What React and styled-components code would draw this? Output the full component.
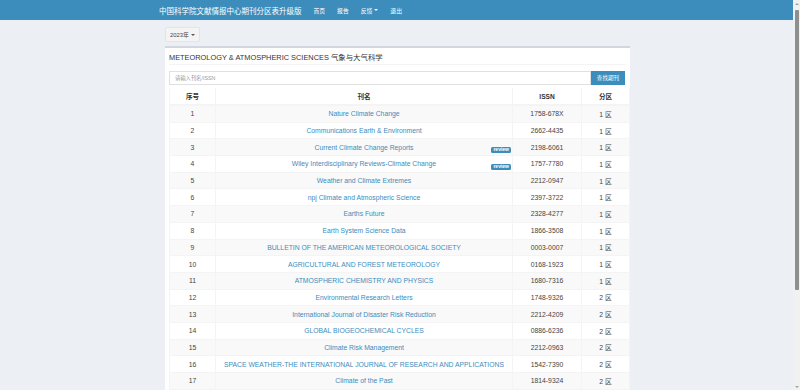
import React from 'react';
import styled, { createGlobalStyle } from 'styled-components';

const GlobalStyle = createGlobalStyle`
  html, body {
    margin: 0;
    padding: 0;
    background: #ecf0f5;
    font-family: "Liberation Sans", "Noto Sans CJK SC", sans-serif;
    color: #333;
    overflow: hidden;
  }
`

// ============== Janela
const Janela = styled.div`
  display: flex;
  height: 100vh;
`
const Pagina = styled.div`
  flex: 1;
  overflow: hidden;
`

// ============== Barra de rolagem
const Rolagem = styled.div`
  width: 7px;
  background: #f1f1f1;
  display: flex;
  flex-direction: column;
  align-items: center;
`
const SetaRolagem = styled.div`
  height: 7px;
  display: flex;
  align-items: center;
  justify-content: center;
  &::after {
    content: '';
    border-left: 2px solid transparent;
    border-right: 2px solid transparent;
    ${props => (props.baixo ? 'border-top' : 'border-bottom')}: 2px solid #a3a3a3;
  }
`
const Trilho = styled.div`
  flex: 1;
  width: 100%;
  display: flex;
  justify-content: center;
  padding-top: 3px;
`
const Polegar = styled.div`
  width: 4px;
  height: 280px;
  background: #8f8f8f;
  border-radius: 1px;
`

// ============== Barra superior
const Navbar = styled.div`
  height: 20px;
  background-color: #3c8dbc;
  display: flex;
  align-items: center;
  padding-left: 159px;
  color: #fff;
`
const Marca = styled.span`
  font-size: 7.5px;
  margin-right: 6px;
`
const ItemMenu = styled.span`
  font-size: 5.8px;
  margin: 0 6px;
  display: flex;
  align-items: center;
  gap: 2px;
`
const Seta = styled.span`
  display: inline-block;
  border-left: 2px solid transparent;
  border-right: 2px solid transparent;
  border-top: 2px solid ${props => props.cor || '#fff'};
`

// ============== Conteudo
const Conteudo = styled.div`
  width: 465px;
  margin: 0 auto;
  padding: 3px 0 0 2px;
`
const BotaoAno = styled.div`
  display: inline-flex;
  align-items: center;
  gap: 2px;
  height: 15px;
  padding: 0 4px;
  background: #f4f4f4;
  border: 1px solid #e4e4e4;
  border-radius: 2px;
  font-size: 5.8px;
  color: #444;
  box-sizing: border-box;
`
const Cartao = styled.div`
  margin-top: 4px;
  background: #fff;
  border-top: 2px solid #d2d6de;
  padding: 0 5px 0 4px;
  min-height: 400px;
`
const Titulo = styled.div`
  font-size: 7.4px;
  color: #333;
  height: 16px;
  display: flex;
  align-items: center;
  border-bottom: 1px solid #f4f4f4;
`
const LinhaBusca = styled.div`
  display: flex;
  margin-top: 6px;
  height: 14px;
`
const CampoBusca = styled.div`
  flex: 1;
  border: 1px solid #e0e0e0;
  font-size: 5.3px;
  color: #999;
  display: flex;
  align-items: center;
  padding-left: 5px;
`
const BotaoBusca = styled.div`
  width: 34px;
  background: #3c8dbc;
  color: #fff;
  font-size: 5.6px;
  display: flex;
  align-items: center;
  justify-content: center;
`

// ============== Tabela
const Tabela = styled.table`
  width: 100%;
  border-collapse: collapse;
  margin-top: 3px;
  table-layout: fixed;
`
const Cabecalho = styled.th`
  height: 16px;
  padding: 0;
  font-size: 6.6px;
  font-weight: bold;
  color: #333;
  border: 1px solid #f4f4f4;
  border-top: none;
  border-bottom: 2px solid #f4f4f4;
  width: ${props => props.largura}px;
`
const Linha = styled.tr`
  background: ${props => (props.listrada ? '#f9f9f9' : '#fff')};
`
const Celula = styled.td`
  height: 15.7px;
  padding: 0;
  font-size: 6.8px;
  text-align: center;
  color: #444;
  border: 1px solid #f4f4f4;
  position: relative;
`
const LinkRevista = styled.span`
  color: #3c8dbc;
`
const Selo = styled.span`
  position: absolute;
  right: 1px;
  top: 7.5px;
  background: #3c8dbc;
  color: #fff;
  font-size: 5px;
  font-weight: bold;
  padding: 0.5px 2px 1px;
  border-radius: 1.5px;
  line-height: 5px;
`

const revistas = [
  ['Nature Climate Change', '1758-678X', 1],
  ['Communications Earth & Environment', '2662-4435', 1],
  ['Current Climate Change Reports', '2198-6061', 1, true],
  ['Wiley Interdisciplinary Reviews-Climate Change', '1757-7780', 1, true],
  ['Weather and Climate Extremes', '2212-0947', 1],
  ['npj Climate and Atmospheric Science', '2397-3722', 1],
  ['Earths Future', '2328-4277', 1],
  ['Earth System Science Data', '1866-3508', 1],
  ['BULLETIN OF THE AMERICAN METEOROLOGICAL SOCIETY', '0003-0007', 1],
  ['AGRICULTURAL AND FOREST METEOROLOGY', '0168-1923', 1],
  ['ATMOSPHERIC CHEMISTRY AND PHYSICS', '1680-7316', 1],
  ['Environmental Research Letters', '1748-9326', 2],
  ['International Journal of Disaster Risk Reduction', '2212-4209', 2],
  ['GLOBAL BIOGEOCHEMICAL CYCLES', '0886-6236', 2],
  ['Climate Risk Management', '2212-0963', 2],
  ['SPACE WEATHER-THE INTERNATIONAL JOURNAL OF RESEARCH AND APPLICATIONS', '1542-7390', 2],
  ['Climate of the Past', '1814-9324', 2],
]

function App() {
  return (
    <>
      <GlobalStyle />
      <Janela>
        <Pagina>
          <Navbar>
            <Marca>中国科学院文献情报中心期刊分区表升级版</Marca>
            <ItemMenu>首页</ItemMenu>
            <ItemMenu>报告</ItemMenu>
            <ItemMenu>反馈 <Seta /></ItemMenu>
            <ItemMenu>退出</ItemMenu>
          </Navbar>
          <Conteudo>
            <BotaoAno>2023年 <Seta cor="#555" /></BotaoAno>
            <Cartao>
              <Titulo>METEOROLOGY &amp; ATMOSPHERIC SCIENCES 气象与大气科学</Titulo>
              <LinhaBusca>
                <CampoBusca>请输入刊名/ISSN</CampoBusca>
                <BotaoBusca>查找期刊</BotaoBusca>
              </LinhaBusca>
              <Tabela>
                <thead>
                  <tr>
                    <Cabecalho largura={45}>序号</Cabecalho>
                    <Cabecalho largura={296}>刊名</Cabecalho>
                    <Cabecalho largura={68}>ISSN</Cabecalho>
                    <Cabecalho largura={47}>分区</Cabecalho>
                  </tr>
                </thead>
                <tbody>
                  {revistas.map(([nome, issn, zona, review], i) => (
                    <Linha key={issn} listrada={i % 2 === 0}>
                      <Celula>{i + 1}</Celula>
                      <Celula>
                        <LinkRevista>{nome}</LinkRevista>
                        {review && <Selo>review</Selo>}
                      </Celula>
                      <Celula>{issn}</Celula>
                      <Celula>{zona} 区</Celula>
                    </Linha>
                  ))}
                </tbody>
              </Tabela>
            </Cartao>
          </Conteudo>
        </Pagina>
        <Rolagem>
          <SetaRolagem />
          <Trilho><Polegar /></Trilho>
          <SetaRolagem baixo />
        </Rolagem>
      </Janela>
    </>
  );
}

export default App;
